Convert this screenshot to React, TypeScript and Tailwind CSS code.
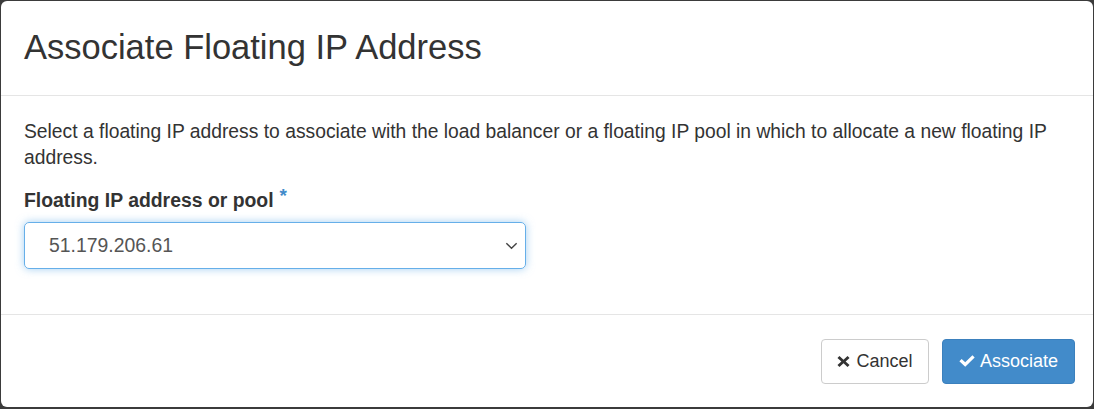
import React from "react";

const font = { fontFamily: '"Liberation Sans", Arial, Helvetica, sans-serif' };

const CheckIcon = () => (
  <svg viewBox="0 0 18 12" className="w-[17px] h-[12px]" fill="currentColor">
    <path d="M0.4 6.2 L2.8 3.8 L6.6 7.4 L14.2 0 L16.6 2.4 L6.6 12 Z" />
  </svg>
);

const TimesIcon = () => (
  <svg viewBox="0 0 14 12" className="w-[13px] h-[11px]" fill="currentColor">
    <path d="M0.4 2.3 L2.6 0 L7 4.1 L11.4 0 L13.6 2.3 L9.3 6 L13.6 9.7 L11.4 12 L7 7.9 L2.6 12 L0.4 9.7 L4.7 6 Z" />
  </svg>
);

const App = () => {
  return (
    <div
      className="w-[1094px] h-[409px] bg-[#3b3b3b] pl-px pt-px pr-px pb-[2px]"
      style={font}
    >
      <div className="h-full bg-white rounded-[6px] flex flex-col text-[#333]">
        {/* Header */}
        <div className="h-[95px] flex items-center px-[23px] border-b border-[#e5e5e5]">
          <h4 className="text-[34.5px] leading-none pb-[2px]">
            Associate Floating IP Address
          </h4>
        </div>

        {/* Body */}
        <div className="flex-1 px-[23px] pt-[23px] border-b border-[#e5e5e5]">
          <p className="text-[19.3px] leading-[26px] text-[#333]">
            Select a floating IP address to associate with the load balancer or a
            floating IP pool in which to allocate a new floating IP address.
          </p>
          <div className="mt-[16px] flex items-start">
            <label className="text-[19.4px] font-bold leading-[26px]">
              Floating IP address or pool
            </label>
            <span className="ml-[6px] text-[19px] font-bold text-[#428bca] leading-none -mt-[1px]">
              *
            </span>
          </div>
          <div className="mt-[9px] w-[502px] h-[47px] rounded-[5px] border border-[#66afe9] shadow-[0_0_8px_rgba(102,175,233,0.6)] flex items-center justify-between pl-[24px] pr-[6px]">
            <span className="text-[19.4px] text-[#555]">51.179.206.61</span>
            <svg viewBox="0 0 16 16" className="w-[15px] h-[15px] text-[#444]" fill="none" stroke="currentColor" strokeWidth="1.5">
              <path d="M2.5 5.5 L8 11 L13.5 5.5" />
            </svg>
          </div>
        </div>

        {/* Footer */}
        <div className="h-[92px] flex items-center justify-end gap-[13px] pr-[18px]">
          <button className="h-[45px] w-[108px] flex items-center justify-center gap-[6px] bg-white border border-[#ccc] rounded-[4px] text-[18px] text-[#333]">
            <TimesIcon />
            <span>Cancel</span>
          </button>
          <button className="h-[45px] w-[133px] flex items-center justify-center gap-[4px] bg-[#428bca] border border-[#3b80bd] rounded-[4px] text-[18px] text-white">
            <CheckIcon />
            <span>Associate</span>
          </button>
        </div>
      </div>
    </div>
  );
};

export default App;
